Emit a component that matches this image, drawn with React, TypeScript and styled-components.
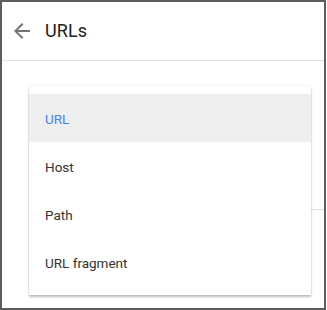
import * as React from 'react';
import styled, { createGlobalStyle } from 'styled-components';

const GlobalStyle = createGlobalStyle`
  html, body {
    margin: 0;
    padding: 0;
    background: #ffffff;
  }
  body {
    font-family: Roboto, "Liberation Sans", Arial, sans-serif;
    -webkit-font-smoothing: antialiased;
  }
`;

const Frame = styled.div`
  width: 326px;
  height: 310px;
  box-sizing: border-box;
  border: 2px solid #5c5c5c;
  display: flex;
  flex-direction: column;
  background: #ffffff;
  overflow: hidden;
`;

const Header = styled.div`
  height: 58px;
  flex-shrink: 0;
  display: flex;
  align-items: center;
  padding-left: 8px;
  gap: 11px;
  border-bottom: 1px solid #e0e0e0;
`;

const BackButton = styled.button`
  width: 24px;
  height: 24px;
  padding: 0;
  border: none;
  background: none;
  display: flex;
  align-items: center;
  justify-content: center;
  color: #757575;
  cursor: pointer;
`;

const Title = styled.h1`
  margin: 0;
  padding-bottom: 1px;
  font-size: 18px;
  font-weight: 400;
  color: #212121;
  letter-spacing: 0.1px;
`;

const Body = styled.div`
  position: relative;
  flex-grow: 1;
`;

const Field = styled.div`
  margin: 100px 0 0 27px;
  height: 48px;
  border-bottom: 1px solid #e0e0e0;
`;

const Menu = styled.ul`
  position: absolute;
  top: 25px;
  left: 27px;
  width: 282px;
  margin: 0;
  padding: 8px 0 9px;
  list-style: none;
  background: #ffffff;
  box-shadow: 0 2px 2px rgba(0, 0, 0, 0.24), 0 0 2px rgba(0, 0, 0, 0.12);
`;

const MenuItem = styled.li<{ selected?: boolean }>`
  height: 48px;
  box-sizing: border-box;
  display: flex;
  align-items: center;
  padding: 2px 16px 0;
  font-size: 13.5px;
  color: ${(p) => (p.selected ? '#4285f4' : '#333333')};
  background: ${(p) => (p.selected ? '#eeeeee' : 'transparent')};
`;

const options = ['URL', 'Host', 'Path', 'URL fragment'];

export default function App() {
  return (
    <>
      <GlobalStyle />
      <Frame>
        <Header>
          <BackButton aria-label="Back">
            <svg width="24" height="24" viewBox="0 0 24 24" fill="currentColor">
              <path d="M20 11H7.83l5.59-5.59L12 4l-8 8 8 8 1.41-1.41L7.83 13H20v-2z" />
            </svg>
          </BackButton>
          <Title>URLs</Title>
        </Header>
        <Body>
          <Field />
          <Menu>
            {options.map((o, i) => (
              <MenuItem key={o} selected={i === 0}>
                {o}
              </MenuItem>
            ))}
          </Menu>
        </Body>
      </Frame>
    </>
  );
}
